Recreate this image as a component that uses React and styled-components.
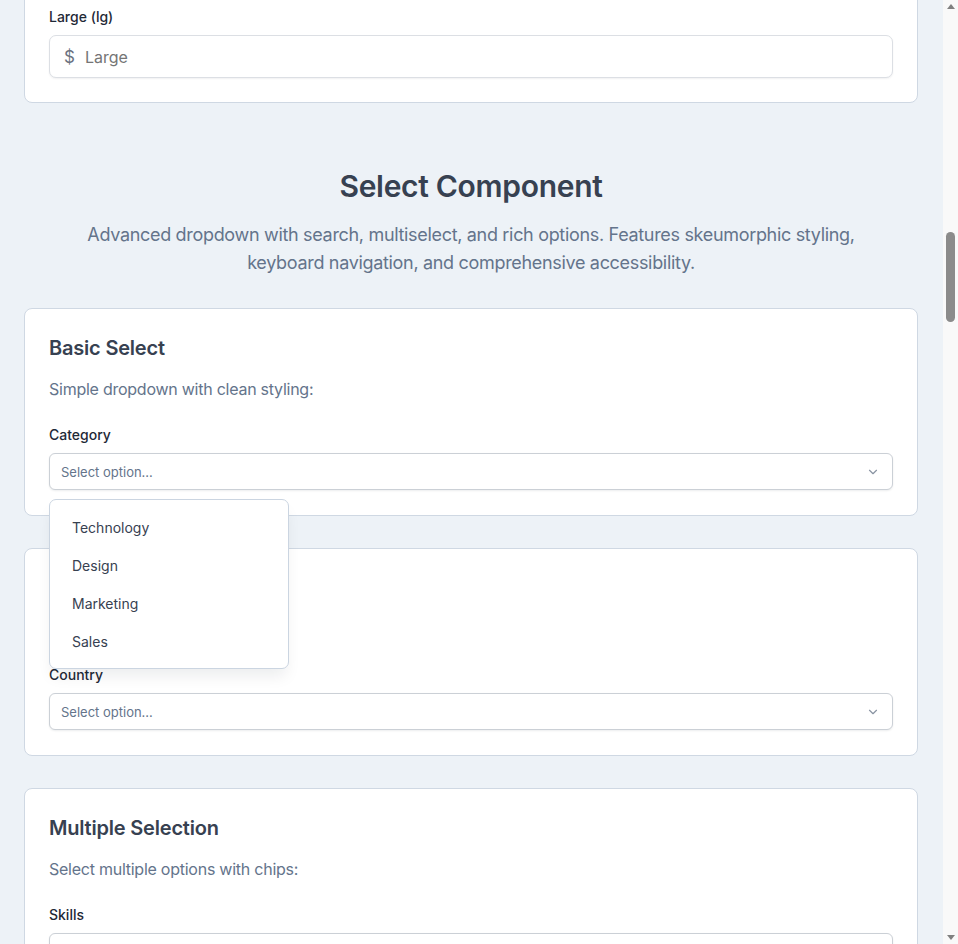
import React from 'react';
import styled, { createGlobalStyle } from 'styled-components';

const GlobalStyle = createGlobalStyle`
  html, body {
    margin: 0;
    padding: 0;
    overflow: hidden;
    background: #edf2f7;
  }
  * {
    box-sizing: border-box;
  }
`;

const Frame = styled.div`
  display: flex;
  height: 100vh;
  overflow: hidden;
  font-family: Inter, 'Liberation Sans', sans-serif;
  color: #374151;
`;

const Main = styled.main`
  flex: 1;
  display: flex;
  flex-direction: column;
  gap: 32px;
  padding: 0 25px 0 24px;
  background: #edf2f7;
`;

const Card = styled.section`
  position: relative;
  z-index: ${p => (p.raised ? 2 : 1)};
  background: #fff;
  border: 1px solid #cfd8e3;
  border-radius: 8px;
  padding: 24px 24px 25px;
  display: flex;
  flex-direction: column;
`;

const ClippedCard = styled(Card)`
  margin-top: -40px;
  padding-top: 47px;
  padding-bottom: 24px;
  border-top-left-radius: 0;
  border-top-right-radius: 0;
`;

const Label = styled.label`
  display: block;
  font-size: 14px;
  font-weight: 500;
  color: #1f2937;
  margin-bottom: 9px;
  line-height: 18px;
`;

const InputWrap = styled.div`
  display: flex;
  align-items: center;
  gap: 8px;
  height: 43px;
  padding: 0 14px;
  border: 1px solid #dcdfe4;
  border-radius: 7px;
  box-shadow: 0 1px 2px rgba(15, 23, 42, 0.06);
  background: #fff;
`;

const Prefix = styled.span`
  font-size: 17px;
  color: #6b7280;
`;

const Input = styled.input`
  flex: 1;
  border: none;
  outline: none;
  font-family: inherit;
  font-size: 16px;
  color: #374151;
  background: transparent;

  ::placeholder {
    color: #6b7280;
  }
`;

const Intro = styled.header`
  text-align: center;
  padding: 33px 30px 0;
  margin-bottom: -1px;
`;

const Title = styled.h2`
  margin: 0 0 17px;
  font-size: 30px;
  font-weight: 600;
  letter-spacing: -0.3px;
  color: #374151;
  line-height: 36px;
`;

const Lead = styled.p`
  margin: 0;
  font-size: 18px;
  line-height: 28px;
  color: #64748b;
  letter-spacing: -0.32px;
`;

const CardTitle = styled.h3`
  margin: 1px 0 0;
  font-size: 20px;
  font-weight: 600;
  line-height: 28px;
  color: #374151;
  letter-spacing: -0.2px;
`;

const CardText = styled.p`
  margin: 15px 0 25px;
  font-size: 16px;
  line-height: 24px;
  color: #64748b;
  letter-spacing: -0.25px;
`;

const Field = styled.div`
  position: relative;
`;

const Trigger = styled.button`
  width: 100%;
  height: 37px;
  display: flex;
  align-items: center;
  justify-content: space-between;
  padding: 0 12px 0 11px;
  background: #fff;
  border: 1px solid #cbd0d6;
  border-radius: 6px;
  box-shadow: 0 1px 2px rgba(15, 23, 42, 0.08);
  font-family: inherit;
  font-size: 13px;
  color: #64748b;
  cursor: pointer;
`;

const Menu = styled.ul`
  position: absolute;
  z-index: 10;
  top: calc(100% + 9px);
  left: 0;
  width: 240px;
  margin: 0;
  padding: 8px 0;
  list-style: none;
  background: #fff;
  border: 1px solid #cbd5e1;
  border-radius: 7px;
  box-shadow: 0 10px 15px -3px rgba(15, 23, 42, 0.08);
`;

const MenuItem = styled.li`
  height: 38px;
  display: flex;
  align-items: center;
  padding: 0 22px;
  font-size: 14px;
  color: #374151;
`;

const Rail = styled.div`
  width: 15px;
  flex-shrink: 0;
  display: flex;
  flex-direction: column;
  align-items: center;
  background: #f9f9f9;
  padding: 4px 0;
`;

const Arrow = styled.div`
  width: 0;
  height: 0;
  border-left: 4px solid transparent;
  border-right: 4px solid transparent;
  ${p =>
    p.down
      ? 'border-top: 5px solid #808080;'
      : 'border-bottom: 5px solid #808080;'}
`;

const Thumb = styled.div`
  width: 9px;
  height: 90px;
  margin-top: ${p => p.offset}px;
  border-radius: 5px;
  background: #8b8b8b;
`;

const RailSpacer = styled.div`
  flex: 1;
`;

function Chevron() {
  return (
    <svg width="14" height="14" viewBox="0 0 24 24" fill="none" stroke="#8a94a3" strokeWidth="2" strokeLinecap="round" strokeLinejoin="round">
      <path d="m6 9 6 6 6-6" />
    </svg>
  );
}

function SelectField({ label, open, options = [] }) {
  return (
    <Field>
      <Label>{label}</Label>
      <Trigger type="button">
        <span>Select option...</span>
        <Chevron />
      </Trigger>
      {open && (
        <Menu>
          {options.map(o => (
            <MenuItem key={o}>{o}</MenuItem>
          ))}
        </Menu>
      )}
    </Field>
  );
}

export default function App() {
  return (
    <>
      <GlobalStyle />
      <Frame>
        <Main>
          <ClippedCard>
            <Label>Large (lg)</Label>
            <InputWrap>
              <Prefix>$</Prefix>
              <Input placeholder="Large" />
            </InputWrap>
          </ClippedCard>

          <Intro>
            <Title>Select Component</Title>
            <Lead>
              Advanced dropdown with search, multiselect, and rich options. Features skeumorphic styling,
              keyboard navigation, and comprehensive accessibility.
            </Lead>
          </Intro>

          <Card raised>
            <CardTitle>Basic Select</CardTitle>
            <CardText>Simple dropdown with clean styling:</CardText>
            <SelectField
              label="Category"
              open
              options={['Technology', 'Design', 'Marketing', 'Sales']}
            />
          </Card>

          <Card>
            <CardTitle>Searchable</CardTitle>
            <CardText>Type to filter:</CardText>
            <SelectField label="Country" />
          </Card>

          <Card>
            <CardTitle>Multiple Selection</CardTitle>
            <CardText>Select multiple options with chips:</CardText>
            <SelectField label="Skills" />
          </Card>
        </Main>
        <Rail>
          <Arrow />
          <Thumb offset={223} />
          <RailSpacer />
          <Arrow down />
        </Rail>
      </Frame>
    </>
  );
}
